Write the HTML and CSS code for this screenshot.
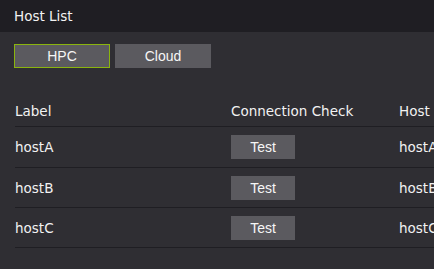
FILE: index.html
```html
<!DOCTYPE html>
<html lang="en">
<head>
    <meta charset="UTF-8">
    <meta name="viewport" content="width=device-width, initial-scale=1.0">
    <title>Host List</title>
    <link rel="stylesheet" href="styles.css">
</head>
<body>
    <div class="title-bar">Host List</div>
    <div class="content">
        <div class="tabs">
            <button class="tab active">HPC</button>
            <button class="tab">Cloud</button>
        </div>
        <table class="host-table">
            <thead>
                <tr>
                    <th class="col-label">Label</th>
                    <th class="col-check">Connection Check</th>
                    <th class="col-host">Host</th>
                </tr>
            </thead>
            <tbody>
                <tr>
                    <td>hostA</td>
                    <td><button class="test-button">Test</button></td>
                    <td>hostA</td>
                </tr>
                <tr>
                    <td>hostB</td>
                    <td><button class="test-button">Test</button></td>
                    <td>hostB</td>
                </tr>
                <tr>
                    <td>hostC</td>
                    <td><button class="test-button">Test</button></td>
                    <td>hostC</td>
                </tr>
            </tbody>
        </table>
    </div>
</body>
</html>
```

FILE: styles.css
```css
body {
    margin: 0;
    background-color: #2f2e33;
    color: #f2f2f2;
    font-family: "DejaVu Sans", Verdana, sans-serif;
    font-size: 13.5px;
    overflow: hidden;
    width: 434px;
    height: 269px;
}

.title-bar {
    height: 32px;
    line-height: 32px;
    padding-left: 14px;
    background-color: #1f1e23;
}

.content {
    padding: 12px 0 0 14px;
}

.tabs {
    display: flex;
    gap: 5px;
}

.tab {
    width: 96px;
    height: 24px;
    padding: 0;
    background-color: #5b5a5f;
    color: #f6f6f6;
    border: 1px solid #5b5a5f;
    font-family: "Liberation Sans", Arial, sans-serif;
    font-size: 14px;
    cursor: pointer;
}

.tab.active {
    border-color: #8ab40e;
}

.host-table {
    margin-top: 28px;
    margin-left: 1px;
    border-collapse: collapse;
    width: 560px;
}

.host-table th,
.host-table td {
    padding: 0;
    text-align: left;
    font-weight: normal;
    border-bottom: 1px solid #1f1e23;
    vertical-align: middle;
    white-space: nowrap;
}

.host-table th {
    height: 30px;
}

.host-table td {
    height: 39px;
}

.host-table tbody tr:first-child td {
    height: 40px;
}

.col-label {
    width: 216px;
}

.col-check {
    width: 168px;
}

.test-button {
    display: block;
    width: 64px;
    height: 24px;
    padding: 0;
    border: none;
    background-color: #5b5a5f;
    color: #f6f6f6;
    font-family: "Liberation Sans", Arial, sans-serif;
    font-size: 14px;
    cursor: pointer;
}
```
